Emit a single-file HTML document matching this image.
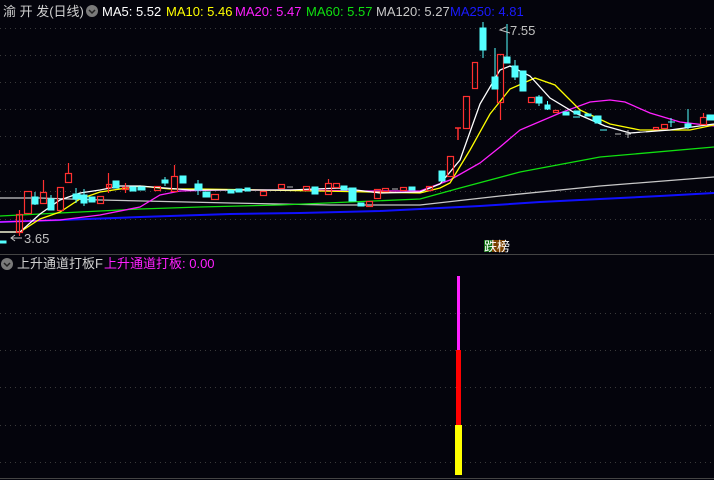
<!DOCTYPE html>
<html><head><meta charset="utf-8"><style>
html,body{margin:0;padding:0;background:#04040c;width:714px;height:480px;overflow:hidden}
svg{display:block}
text{font-family:"Liberation Sans","Noto Sans CJK SC",sans-serif;font-size:13px}
</style></head><body>
<svg width="714" height="480" viewBox="0 0 714 480" xmlns="http://www.w3.org/2000/svg">
<rect width="714" height="480" fill="#04040c"/>
<g stroke="#3a3a3a" stroke-dasharray="1 4" stroke-width="1">
<line x1="0" y1="28.5" x2="714" y2="28.5"/>
<line x1="0" y1="55.5" x2="714" y2="55.5"/>
<line x1="0" y1="82.5" x2="714" y2="82.5"/>
<line x1="0" y1="109.5" x2="714" y2="109.5"/>
<line x1="0" y1="136.5" x2="714" y2="136.5"/>
<line x1="0" y1="164.5" x2="714" y2="164.5"/>
<line x1="0" y1="191.5" x2="714" y2="191.5"/>
<line x1="0" y1="219.5" x2="714" y2="219.5"/>
<line x1="0" y1="313.5" x2="714" y2="313.5"/>
<line x1="0" y1="350.5" x2="714" y2="350.5"/>
<line x1="0" y1="387.5" x2="714" y2="387.5"/>
<line x1="0" y1="425.5" x2="714" y2="425.5"/>
<line x1="0" y1="462.5" x2="714" y2="462.5"/>
</g>
<line x1="0" y1="254.5" x2="714" y2="254.5" stroke="#444" />
<line x1="0" y1="478.5" x2="714" y2="478.5" stroke="#444" />

<g fill="none" stroke-width="1.3">
<polyline stroke="#1010ff" stroke-width="2" points="0,222 60,220 140,217 230,214 300,213 380,211 420,209 480,206 540,202 600,199 660,196 714,193"/>
<polyline stroke="#c8c8c8" points="0,198 40,198 100,200 230,203 330,205 420,205 500,196 600,186 714,177"/>
<polyline stroke="#10e010" points="0,216 60,213 140,209 200,207 280,205 420,199 460,188 520,172 600,157 714,147"/>
<polyline stroke="#ff20ff" points="0,222 60,220 100,215 140,207 160,195 180,191 220,190 300,190 360,191 420,191 450,180 480,163 500,147 520,130 560,113 590,102 610,100 625,102 650,113 680,122 714,126"/>
<polyline stroke="#ffff00" points="0,232 20,232 40,219 60,212 80,199 100,192 140,186 170,189 200,189 260,190 320,191 420,193 440,188 450,183 470,150 490,114 510,89 535,78 555,85 580,110 610,124 640,130 690,130 714,125"/>
<polyline stroke="#ffffff" points="0,232 20,232 40,214 60,200 80,193 100,190 120,186 140,186 190,190 240,190 290,190 340,188 380,193 420,192 440,184 460,160 480,104 500,70 510,66 530,76 550,98 575,113 605,126 630,133 670,130 714,124"/>
</g>

<g fill="none" stroke="#ff3030" stroke-width="1.2">
<rect x="16.5" y="214.5" width="6" height="18"/><line x1="19.5" y1="210" x2="19.5" y2="236"/>
<rect x="24.5" y="191.5" width="7" height="22"/>
<rect x="40.5" y="192.5" width="6" height="11"/><line x1="43.5" y1="180" x2="43.5" y2="192"/>
<rect x="57.5" y="187.5" width="6" height="23"/>
<rect x="65.5" y="173.5" width="6" height="9"/><line x1="68.5" y1="163" x2="68.5" y2="173"/>
<rect x="97.5" y="196.5" width="6" height="7"/>
<rect x="106.5" y="184.5" width="5" height="3"/><line x1="108.5" y1="173" x2="108.5" y2="193"/>
<rect x="122.5" y="187.5" width="6" height="2"/><line x1="125.5" y1="183" x2="125.5" y2="193"/>
<rect x="154.5" y="186.5" width="6" height="4"/>
<rect x="171.5" y="176.5" width="6" height="15"/><line x1="174.5" y1="165" x2="174.5" y2="176"/>
<rect x="211.5" y="194.5" width="7" height="5"/>
<rect x="260.5" y="191.5" width="6" height="4"/>
<rect x="278.5" y="184.5" width="6" height="4"/>
<rect x="303.5" y="186.5" width="6" height="4"/>
<rect x="325.5" y="183.5" width="6" height="11"/><line x1="328.5" y1="179" x2="328.5" y2="183"/>
<rect x="333.5" y="183.5" width="6" height="4"/>
<rect x="366.5" y="201.5" width="6" height="5"/>
<rect x="374.5" y="189.5" width="6" height="9"/>
<rect x="382.5" y="188.5" width="6" height="3"/>
<rect x="400.5" y="187.5" width="6" height="3"/>
<rect x="426.5" y="186.5" width="6" height="4"/>
<rect x="447.5" y="156.5" width="6" height="20"/>
<rect x="463.5" y="96.5" width="6" height="32"/>
<rect x="472.5" y="62.5" width="5" height="26"/>
<rect x="497.5" y="54.5" width="6" height="48"/><line x1="500.5" y1="102" x2="500.5" y2="120"/>
<rect x="528.5" y="97.5" width="6" height="5"/>
<rect x="553.5" y="110.5" width="5" height="2"/>
<rect x="653.5" y="127.5" width="5" height="2"/>
<rect x="661.5" y="124.5" width="6" height="4"/>
<rect x="700.5" y="117.5" width="6" height="7"/><line x1="703.5" y1="113" x2="703.5" y2="117"/>
</g>
<g stroke="#ff3030" stroke-width="1.5">
<line x1="455" y1="128" x2="461" y2="128"/><line x1="458" y1="128" x2="458" y2="140"/>
</g>
<g fill="#54ffff" stroke="#54ffff" stroke-width="1">
<rect x="0" y="241" width="6" height="2"/>
<rect x="32" y="197" width="6" height="7"/><line x1="35" y1="192" x2="35" y2="205"/>
<rect x="48" y="199" width="6" height="11"/><line x1="51" y1="195" x2="51" y2="199"/>
<rect x="73" y="194" width="7" height="5"/><line x1="76" y1="188" x2="76" y2="203"/>
<rect x="81" y="195" width="6" height="8"/><line x1="84" y1="189" x2="84" y2="206"/>
<rect x="89" y="197" width="6" height="5"/>
<rect x="113" y="181" width="6" height="7"/>
<rect x="130" y="187" width="6" height="4"/>
<rect x="138" y="187" width="7" height="3"/>
<rect x="162" y="180" width="6" height="3"/><line x1="165" y1="177" x2="165" y2="186"/>
<rect x="180" y="176" width="6" height="7"/>
<rect x="195" y="184" width="7" height="6"/><line x1="198" y1="180" x2="198" y2="195"/>
<rect x="203" y="192" width="7" height="5"/>
<rect x="228" y="190" width="6" height="3"/>
<rect x="236" y="189" width="6" height="3"/>
<rect x="245" y="188" width="5" height="3"/>
<rect x="312" y="187" width="6" height="7"/>
<rect x="341" y="186" width="6" height="4"/>
<rect x="349" y="188" width="7" height="13"/>
<rect x="358" y="203" width="6" height="3"/>
<rect x="409" y="187" width="6" height="3"/>
<rect x="439" y="171" width="6" height="10"/>
<rect x="480" y="28" width="6" height="22"/><line x1="483" y1="22" x2="483" y2="58"/>
<rect x="492" y="77" width="6" height="12"/><line x1="495" y1="48" x2="495" y2="89"/>
<rect x="504" y="57" width="6" height="6"/><line x1="507" y1="24" x2="507" y2="63"/>
<rect x="512" y="66" width="6" height="11"/><line x1="515" y1="60" x2="515" y2="80"/>
<rect x="520" y="71" width="6" height="20"/>
<rect x="536" y="97" width="6" height="6"/><line x1="539" y1="95" x2="539" y2="106"/>
<rect x="545" y="105" width="5" height="4"/><line x1="547.5" y1="101" x2="547.5" y2="110"/>
<rect x="563" y="112" width="6" height="3"/>
<rect x="574" y="111" width="6" height="3"/>
<rect x="585" y="114" width="6" height="2"/>
<rect x="593" y="117" width="6" height="4"/>
<rect x="595" y="116" width="6" height="7"/>
<rect x="685" y="124" width="6" height="3"/><line x1="688" y1="109" x2="688" y2="129"/>
<rect x="707" y="115" width="7" height="5"/>
</g>
<g stroke="#54ffff" stroke-width="1">
<line x1="600" y1="130" x2="607" y2="130"/>
<line x1="573" y1="117" x2="580" y2="117"/>
<line x1="668" y1="122" x2="675" y2="122"/><line x1="671" y1="118" x2="671" y2="127"/>
</g>
<g stroke="#bbbbbb" stroke-width="1">
<line x1="615" y1="134" x2="621" y2="134"/>
<line x1="625" y1="134" x2="631" y2="134"/><line x1="628" y1="130" x2="628" y2="138"/>
<line x1="287" y1="187" x2="293" y2="187"/>
<line x1="392" y1="189" x2="398" y2="189"/>
<line x1="640" y1="132" x2="646" y2="132"/>
</g>

<text x="510" y="35" fill="#c0c0c0" font-size="12">7.55</text>
<polyline points="506,27 500,30 510,33" fill="none" stroke="#c0c0c0" stroke-width="1"/>
<text x="24" y="243" fill="#c0c0c0" font-size="12">3.65</text>
<line x1="11" y1="238" x2="22" y2="238" stroke="#c0c0c0"/>
<polyline points="15,235 11,238 15,241" fill="none" stroke="#c0c0c0"/>
<rect x="484" y="240" width="8" height="12" fill="#107010"/>
<rect x="492" y="240" width="13" height="12" fill="#7a4000"/>
<text x="484" y="251" fill="#fff" font-size="11">跌榜</text>

<text x="3" y="16" fill="#d0d0d0">渝 开 发(日线)</text>
<circle cx="92" cy="11" r="6" fill="#7a7a7a"/>
<polyline points="89,10 92,13 95,10" fill="none" stroke="#222" stroke-width="1.5"/>
<text x="102" y="16" fill="#ffffff">MA5: 5.52</text>
<text x="166" y="16" fill="#ffff00">MA10: 5.46</text>
<text x="235" y="16" fill="#ff20ff">MA20: 5.47</text>
<text x="306" y="16" fill="#10e010">MA60: 5.57</text>
<text x="376" y="16" fill="#c8c8c8">MA120: 5.27</text>
<text x="450" y="16" fill="#1a1aff">MA250: 4.81</text>

<circle cx="7" cy="264" r="6" fill="#7a7a7a"/>
<polyline points="4,263 7,266 10,263" fill="none" stroke="#222" stroke-width="1.5"/>
<text x="17" y="268" fill="#d0d0d0">上升通道打板F</text>
<text x="104" y="268" fill="#ff20ff">上升通道打板: 0.00</text>

<rect x="457" y="276" width="3" height="74" fill="#ff20ff"/>
<rect x="456" y="350" width="5" height="75" fill="#ff0000"/>
<rect x="455" y="425" width="7" height="50" fill="#ffff00"/>
</svg>
</body></html>
